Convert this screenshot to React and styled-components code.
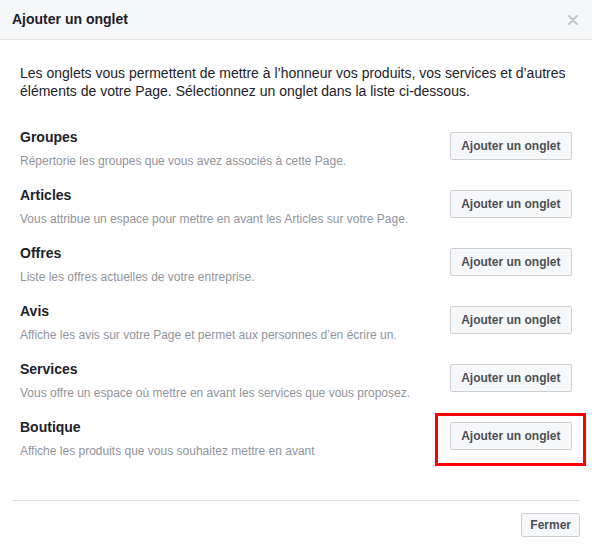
import React from "react";
import styled, { createGlobalStyle } from "styled-components";

const Global = createGlobalStyle`
  html, body { margin: 0; padding: 0; background: #ffffff; }
  body { font-family: "Liberation Sans", Arial, Helvetica, sans-serif; -webkit-font-smoothing: antialiased; }
  * { box-sizing: border-box; }
`;

const Dialog = styled.div`
  width: 592px;
  background: #ffffff;
`;

const Header = styled.div`
  height: 40px;
  display: flex;
  align-items: center;
  justify-content: space-between;
  padding: 0 12px;
  background: #f6f7f9;
  border-bottom: 1px solid #e5e5e5;
`;

const Title = styled.h3`
  margin: 0;
  font-size: 14px;
  font-weight: bold;
  line-height: 19px;
  color: #1d2129;
`;

const Close = styled.button`
  border: 0;
  background: transparent;
  padding: 0;
  width: 14px;
  height: 14px;
  display: flex;
  align-items: center;
  justify-content: center;
  cursor: pointer;
`;

const Body = styled.div`
  padding: 24px 20px 41px;
`;

const Intro = styled.p`
  margin: 0 0 28px;
  font-size: 14px;
  line-height: 18px;
  color: #1d2129;
`;

const List = styled.div`
  display: flex;
  flex-direction: column;
  gap: 17px;
`;

const Row = styled.div`
  display: flex;
  justify-content: space-between;
  align-items: flex-start;
`;

const Info = styled.div`
  display: flex;
  flex-direction: column;
  gap: 7px;
`;

const RowTitle = styled.div`
  font-size: 14px;
  font-weight: bold;
  line-height: 18px;
  color: #1d2129;
`;

const RowDesc = styled.div`
  font-size: 12px;
  line-height: 16px;
  color: #90949c;
`;

const ButtonWrap = styled.div`
  position: relative;
  margin-top: 4px;
`;

const Highlight = styled.div`
  position: absolute;
  left: -15px;
  right: -14px;
  top: -9px;
  bottom: -16px;
  border: 3px solid #ff0000;
  pointer-events: none;
`;

const Button = styled.button`
  font-family: inherit;
  font-size: 12px;
  font-weight: bold;
  color: #4b4f56;
  background: #f6f7f9;
  border: 1px solid #ced0d4;
  border-radius: 2px;
  height: ${(p) => (p.$small ? "24px" : "28px")};
  padding: 0 ${(p) => (p.$small ? "8px" : "10.5px")};
  line-height: 22px;
  cursor: pointer;
  white-space: nowrap;
`;

const Footer = styled.div`
  margin: 0 12px;
  padding: 12px 0;
  border-top: 1px solid #dddfe2;
  display: flex;
  justify-content: flex-end;
`;

const tabs = [
  ["Groupes", "Répertorie les groupes que vous avez associés à cette Page."],
  ["Articles", "Vous attribue un espace pour mettre en avant les Articles sur votre Page."],
  ["Offres", "Liste les offres actuelles de votre entreprise."],
  ["Avis", "Affiche les avis sur votre Page et permet aux personnes d’en écrire un."],
  ["Services", "Vous offre un espace où mettre en avant les services que vous proposez."],
  ["Boutique", "Affiche les produits que vous souhaitez mettre en avant"],
];

export default function App() {
  return (
    <>
      <Global />
      <Dialog>
        <Header>
          <Title>Ajouter un onglet</Title>
          <Close aria-label="Fermer">
            <svg width="10" height="10" viewBox="0 0 10 10">
              <path d="M1 1L9 9M9 1L1 9" stroke="#bec2c9" strokeWidth="1.8" strokeLinecap="round" />
            </svg>
          </Close>
        </Header>
        <Body>
          <Intro>
            Les onglets vous permettent de mettre à l’honneur vos produits, vos services et d’autres
            éléments de votre Page. Sélectionnez un onglet dans la liste ci-dessous.
          </Intro>
          <List>
            {tabs.map(([t, d], i) => (
              <Row key={t}>
                <Info>
                  <RowTitle>{t}</RowTitle>
                  <RowDesc>{d}</RowDesc>
                </Info>
                <ButtonWrap>
                  <Button>Ajouter un onglet</Button>
                  {i === tabs.length - 1 && <Highlight />}
                </ButtonWrap>
              </Row>
            ))}
          </List>
        </Body>
        <Footer>
          <Button $small>Fermer</Button>
        </Footer>
      </Dialog>
    </>
  );
}
